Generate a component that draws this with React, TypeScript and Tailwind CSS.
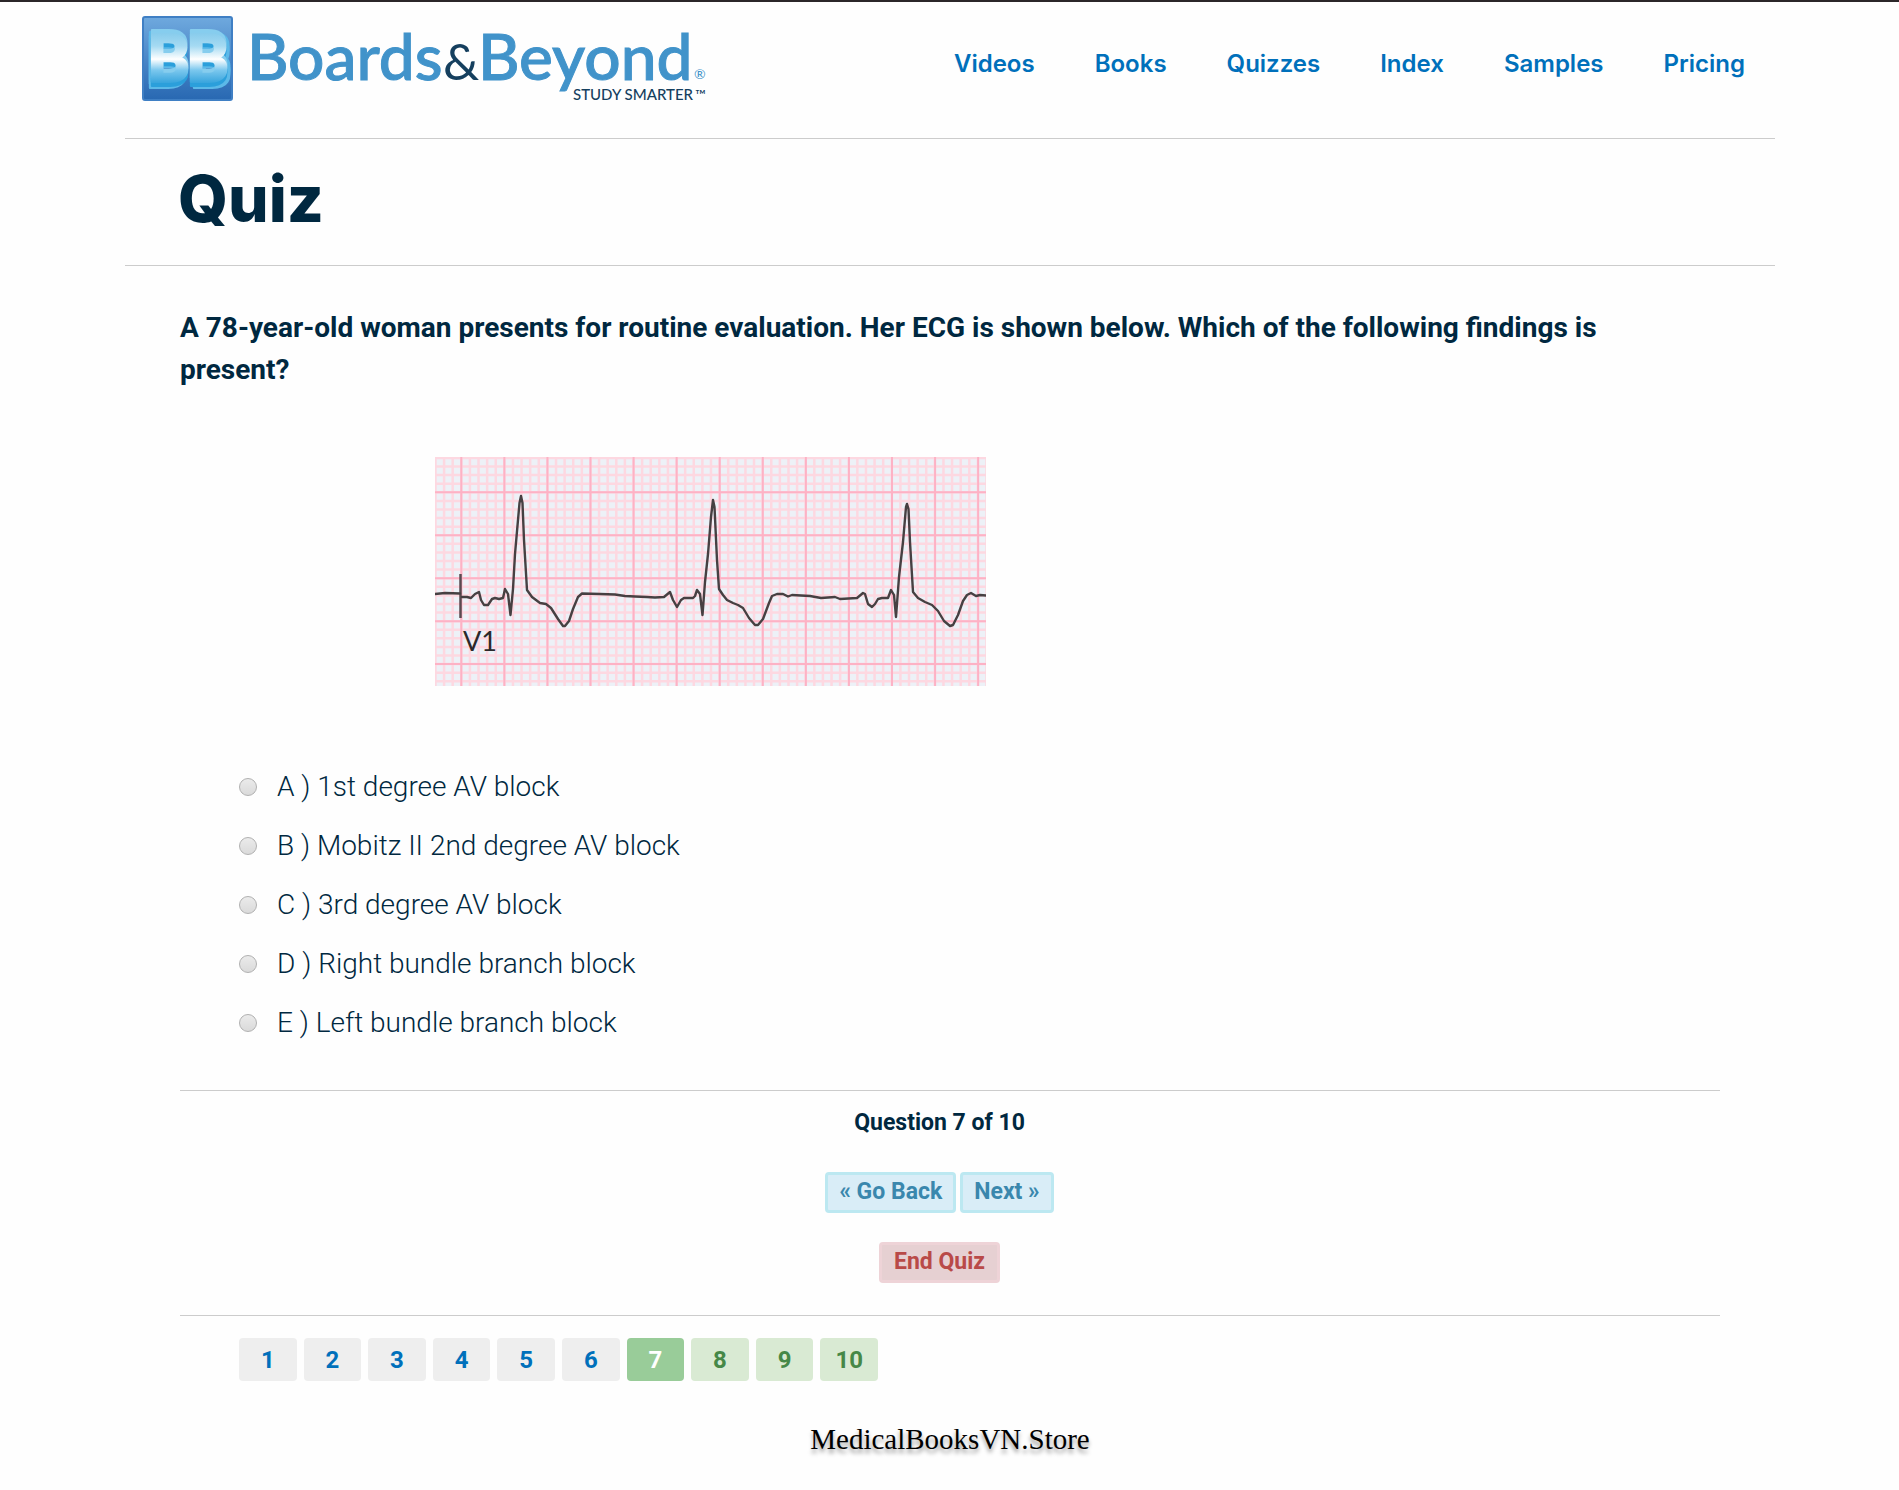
const navLinks = ['Videos', 'Books', 'Quizzes', 'Index', 'Samples', 'Pricing'];

const answers = [
  'A ) 1st degree AV block',
  'B ) Mobitz II 2nd degree AV block',
  'C ) 3rd degree AV block',
  'D ) Right bundle branch block',
  'E ) Left bundle branch block',
];

const CURRENT = 7;
const questionNumbers = Array.from({ length: 10 }, (_, i) => i + 1);

function pageStyle(n: number) {
  if (n === CURRENT) return 'bg-[#99cc99] text-white';
  if (n > CURRENT) return 'bg-[#d9ead3] text-[#468847]';
  return 'bg-[#eeeeee] text-[#0070bb]';
}

function Logo() {
  return (
    <svg width="570" height="94" viewBox="0 0 570 94" role="img" aria-label="Boards & Beyond, Study Smarter">
      <defs>
        <linearGradient id="tile" x1="0" y1="0" x2="0" y2="1">
          <stop offset="0" stopColor="#6fa9de" />
          <stop offset="0.5" stopColor="#4a87c8" />
          <stop offset="1" stopColor="#2868b2" />
        </linearGradient>
        <linearGradient id="face" gradientUnits="userSpaceOnUse" x1="0" y1="12" x2="0" y2="72">
          <stop offset="0" stopColor="#7cc6ea" />
          <stop offset="0.3" stopColor="#a5daf2" />
          <stop offset="0.52" stopColor="#ffffff" />
          <stop offset="0.7" stopColor="#7cc8ee" />
          <stop offset="1" stopColor="#1d96d6" />
        </linearGradient>
      </defs>
      <rect x="1" y="1" width="89" height="83" rx="2" fill="url(#tile)" stroke="#3f7fc4" strokeWidth="2" />
      <g
        fontFamily="Roboto"
        fontWeight="800"
        fontSize="66"
        fill="url(#face)"
        stroke="url(#face)"
        strokeWidth="2"
        strokeLinejoin="round"
      >
        <text
          x="6"
          y="66"
          className="[filter:drop-shadow(0_-4px_0_#86cdee)_drop-shadow(0_4px_0_#2b9fdb)_drop-shadow(-2px_2px_0_#5cb9e8)]"
        >
          B
        </text>
        <text
          x="45"
          y="66"
          className="[filter:drop-shadow(0_-4px_0_#86cdee)_drop-shadow(0_4px_0_#2b9fdb)_drop-shadow(3px_2px_0_#5cb9e8)]"
        >
          B
        </text>
      </g>
      <g fontFamily="Lato" fontWeight="500" fontSize="64" fill="#4193ca" stroke="#4193ca" strokeWidth="1">
        <text x="105" y="64">Boards</text>
        <text x="336" y="64">Beyond</text>
      </g>
      <text x="301" y="64" fontFamily="Lato" fontWeight="400" fontSize="51" fill="#153f5e">&amp;</text>
      <text x="552" y="63" fontFamily="Lato" fontSize="14" fill="#4193ca">®</text>
      <g fontFamily="Lato" fill="#153f5e">
        <text x="431" y="84" fontWeight="500" fontSize="15">STUDY SMARTER</text>
        <text x="553" y="84" fontSize="14">™</text>
      </g>
    </svg>
  );
}

const ecgTrace =
  'M0 137 L10 136 L25 136.500 M27 140 L32 140 L36 141 L40 137 L44 135 L46 143 L49 148 L53 148 L57 142 L60 141 L64 142 L68 141 L70 132 L73 137 L75.500 158 L78 132 L80 97 L84.500 46 L86 39 L87.500 46 L89 83 L92 133 L97 140 L105 146 L111 147 L116 151 L123 162 L128 169 L130 169 L134 164 L138 152 L143 140 L147 136.500 L165 137 L180 137.500 L190 139 L200 139.500 L212 140 L220 140.500 L229 140 L235 135 L238 143 L242 150 L246 143 L249 141 L258 141 L260 139 L262 133 L265 137 L267.500 158 L270 125 L273 97 L276 60 L278 43 L279.500 50 L282 103 L284 132 L288 138 L292 143 L298 146 L303 148 L308 151 L314 161 L320 168 L323 168 L328 162 L334 146 L337 139 L342 137 L348 137 L353 139.500 L357 138 L375 139 L386 141 L400 140 L405 142 L422 141 L428 136 L430 137 L433 147 L437 150 L440 147 L443 142 L447 141 L453 141 L456 133 L459 138 L461 160 L464 120 L468 85 L471 50 L472 47 L473.500 52 L475 85 L478 135 L483 141 L490 145 L497 148 L503 154 L509 164 L515 169 L518 168 L523 158 L528 144 L532 138 L536 136 L541 139 L545 138 L551 138.500';

function EcgStrip() {
  const minor = Array.from({ length: 70 }, (_, i) => i);
  return (
    <svg width="551" height="229" viewBox="0 0 551 229" role="img" aria-label="ECG tracing, lead V1">
      <rect width="551" height="229" fill="#edf1f7" />
      <g stroke="#fdd8e1" strokeWidth="2.500">
        {minor.map((i) => {
          const x = 26.3 + (i - 3) * 8.61;
          return <line key={`x${i}`} x1={x} y1="0" x2={x} y2="229" />;
        })}
        {minor.slice(0, 28).map((i) => {
          const y = 35.3 + (i - 4) * 8.59;
          return <line key={`y${i}`} x1="0" y1={y} x2="551" y2={y} />;
        })}
      </g>
      <g stroke="#fdb2c5" strokeWidth="2">
        {minor.slice(0, 13).map((i) => {
          const x = 26.3 + i * 43.07;
          return <line key={`X${i}`} x1={x} y1="0" x2={x} y2="229" />;
        })}
        {minor.slice(0, 5).map((i) => {
          const y = 35.3 + i * 42.95;
          return <line key={`Y${i}`} x1="0" y1={y} x2="551" y2={y} />;
        })}
      </g>
      <path d="M25.500 117V161" fill="none" stroke="#5a4a50" strokeWidth="2.500" />
      <path d={ecgTrace} fill="none" stroke="#464042" strokeWidth="2.400" strokeLinejoin="round" strokeLinecap="round" />
      <text x="28" y="194" fontFamily="Lato" fontWeight="400" fontSize="27" fill="#2c282a">V1</text>
    </svg>
  );
}

export default function App() {
  return (
    <div className="min-h-screen border-t-2 border-[#2b2729] bg-[#fefefe] pr-[124px] pl-[125px] font-[Roboto,sans-serif] text-[#002840]">
      <header className="flex h-[136px] items-start justify-between pt-[14px] pr-[30px] pl-[17px]">
        <a href="#home">
          <Logo />
        </a>
        <nav className="flex gap-[60px] pt-8 font-[Inter,sans-serif] text-2xl font-semibold text-[#0070bb]">
          {navLinks.map((label) => (
            <a key={label} href={`#${label.toLowerCase()}`}>
              {label}
            </a>
          ))}
        </nav>
      </header>

      <div className="flex h-[128px] border-y border-[#cccccc] pt-5 pl-[53px]">
        <h1 className="font-[Inter,sans-serif] text-[64px] leading-[80px] font-extrabold">Quiz</h1>
      </div>

      <main className="px-[55px] pt-[41px]">
        <form onSubmit={(e) => e.preventDefault()}>
          <fieldset>
            <legend className="max-w-[1480px] text-[28px] leading-[42px] font-bold">
              A 78-year-old woman presents for routine evaluation. Her ECG is shown below. Which of the following
              findings is present?
            </legend>
            <div className="pt-[66px] pl-[255px]">
              <EcgStrip />
            </div>
            <div className="mt-[71px] pl-[59px]">
              {answers.map((answer) => (
                <label key={answer} className="flex h-[59px] items-center gap-5 text-[28px] font-[350]">
                  <input
                    type="radio"
                    name="answer"
                    className="size-[18px] appearance-none rounded-full border border-[#b0b0b0] bg-linear-to-b from-[#ebebeb] to-[#dadada] checked:border-[5px] checked:border-[#0070bb]"
                  />
                  {answer}
                </label>
              ))}
            </div>
          </fieldset>

          <section className="mt-[38px] flex flex-col items-center border-y border-[#cccccc] pt-4 pr-[21px] pb-8 text-[23px] font-bold">
            <p className="leading-8">Question 7 of 10</p>
            <div className="mt-[33px] flex gap-1 text-[#3a87ad]">
              <button type="button" className="h-[41px] rounded border-3 border-[#bce8f1] bg-[#d9edf7] px-[11px]">
                « Go Back
              </button>
              <button type="button" className="h-[41px] rounded border-3 border-[#bce8f1] bg-[#d9edf7] px-[11px]">
                Next »
              </button>
            </div>
            <button
              type="submit"
              className="mt-[29px] h-[41px] rounded border-3 border-[#eed3d7] bg-[#e6d0d2] px-3 text-[#b94a48]"
            >
              End Quiz
            </button>
          </section>
        </form>

        <nav aria-label="Questions" className="mt-[22px] ml-[59px] grid w-[639px] grid-cols-10 gap-[7px]">
          {questionNumbers.map((n) => (
            <a
              key={n}
              href={`#question-${n}`}
              aria-current={n === CURRENT ? 'page' : undefined}
              className={`flex h-[43px] items-center justify-center rounded text-2xl font-bold ${pageStyle(n)}`}
            >
              {n}
            </a>
          ))}
        </nav>
      </main>

      <footer className="pt-[38px] pb-6 text-center font-['Liberation_Serif',serif] text-[29px] leading-10 text-black [text-shadow:0_4px_4px_rgba(0,0,0,0.4)]">
        MedicalBooksVN.Store
      </footer>
    </div>
  );
}
